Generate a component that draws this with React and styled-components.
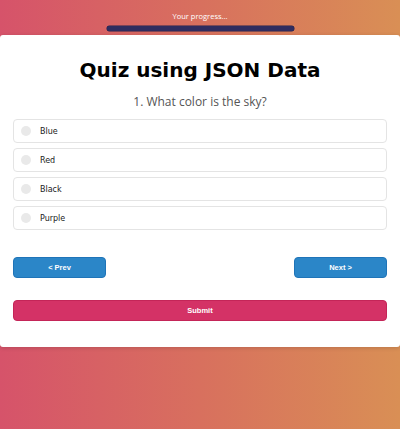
import React from "react";
import styled, { createGlobalStyle } from "styled-components";

const Global = createGlobalStyle`
  html, body { margin: 0; padding: 0; }
  body {
    min-height: 429px;
    background: linear-gradient(90deg, #d6536a 0%, #d8705e 50%, #d98f55 100%);
    font-family: "DejaVu Sans", "Noto Sans", sans-serif;
  }
`;

const Page = styled.div`
  display: flex;
  flex-direction: column;
  min-height: 429px;
`;

const Progress = styled.div`
  display: flex;
  flex-direction: column;
  align-items: center;
  padding-top: 11px;
  height: 24px;
`;

const ProgressLabel = styled.div`
  font-family: "Open Sans", sans-serif;
  font-size: 7.5px;
  line-height: 10px;
  color: #fff;
`;

const ProgressBar = styled.div`
  margin-top: 5px;
  width: 187px;
  height: 5px;
  border-radius: 3px;
  background: #2f2c5f;
  box-shadow: 0 0 0 0.5px #24224d;
`;

const Card = styled.div`
  background: #fff;
  border-radius: 3px;
  box-shadow: 0 1px 4px rgba(0, 0, 0, 0.15);
  padding: 22px 13px 26px;
  display: flex;
  flex-direction: column;
`;

const Title = styled.h1`
  margin: 0;
  text-align: center;
  font-family: "DejaVu Sans", sans-serif;
  font-weight: 700;
  font-size: 20px;
  line-height: 26px;
  color: #000;
`;

const Question = styled.h2`
  margin: 11px 0 9px;
  text-align: center;
  font-family: "Open Sans", sans-serif;
  font-weight: 400;
  font-size: 12px;
  line-height: 16px;
  color: #555;
`;

const Options = styled.div`
  display: flex;
  flex-direction: column;
  gap: 5px;
`;

const Option = styled.label`
  display: flex;
  align-items: center;
  height: 24px;
  box-sizing: border-box;
  border: 1px solid #e4e4e4;
  border-radius: 4px;
  padding-left: 7px;
  font-family: "DejaVu Sans", sans-serif;
  font-size: 8px;
  color: #1a1a1a;
`;

const Radio = styled.span`
  width: 10px;
  height: 10px;
  border-radius: 50%;
  background: #e9e9e9;
  margin-right: 9px;
`;

const NavRow = styled.div`
  display: flex;
  justify-content: space-between;
  margin-top: 27px;
`;

const Button = styled.button`
  width: ${(p) => (p.$full ? "100%" : "93px")};
  height: 21px;
  box-sizing: border-box;
  border-radius: 4px;
  border: 1px solid ${(p) => (p.$danger ? "#c42558" : "#1f74b8")};
  background: ${(p) => (p.$danger ? "#d43266" : "#2b86c8")};
  color: #fff;
  font-family: "Liberation Sans", Arial, sans-serif;
  font-weight: 700;
  font-size: 7.5px;
  padding: 0;
  cursor: pointer;
`;

const SubmitRow = styled.div`
  margin-top: 22px;
  display: flex;
`;

const options = ["Blue", "Red", "Black", "Purple"];

export default function App() {
  return (
    <Page>
      <Global />
      <Progress>
        <ProgressLabel>Your progress...</ProgressLabel>
        <ProgressBar />
      </Progress>
      <Card>
        <Title>Quiz using JSON Data</Title>
        <Question>1. What color is the sky?</Question>
        <Options>
          {options.map((o) => (
            <Option key={o}>
              <Radio />
              {o}
            </Option>
          ))}
        </Options>
        <NavRow>
          <Button>&lt; Prev</Button>
          <Button>Next &gt;</Button>
        </NavRow>
        <SubmitRow>
          <Button $full $danger>Submit</Button>
        </SubmitRow>
      </Card>
    </Page>
  );
}
